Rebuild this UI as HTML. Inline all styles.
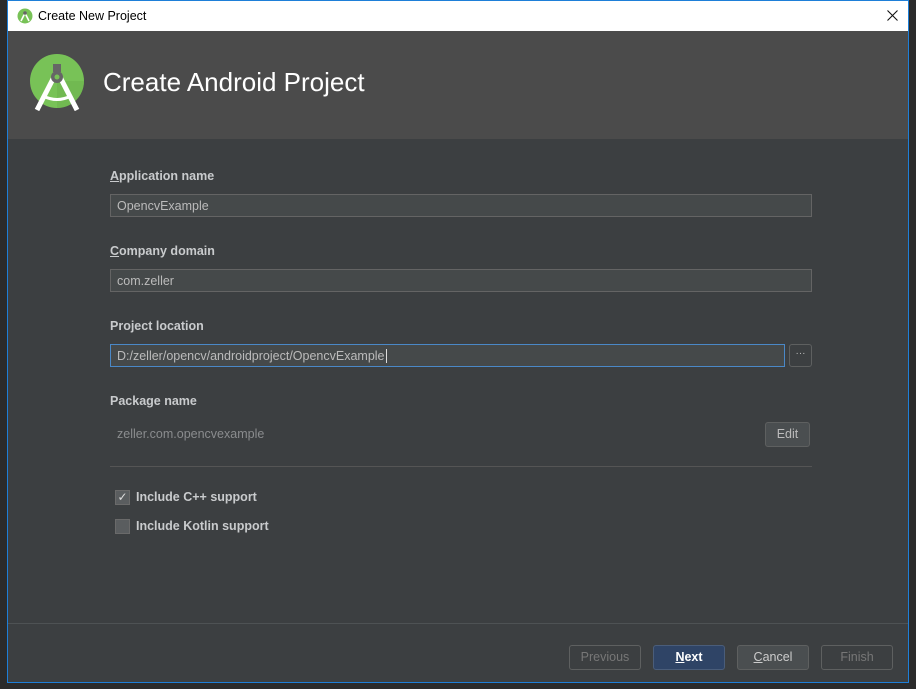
<!DOCTYPE html><html><head><style>
body{margin:0;width:916px;height:689px;background:#2b2b2b;position:relative;overflow:hidden;font-family:"Liberation Sans",sans-serif;}
.a{position:absolute}
.win{left:7px;top:0;width:900px;height:681px;border:1px solid #1e7fd8;background:#3c3f41}
.lbl{color:#c9cbcd;font-size:12.5px;font-weight:bold}
.fld{background:#45494a;border:1px solid #646464;height:21px;color:#bbb;font-size:12.5px;line-height:21px;padding-left:6px;box-sizing:border-box}
.btn{border:1px solid #5e6060;border-radius:3px;height:25px;width:72px;box-sizing:border-box;text-align:center;line-height:23px;font-size:12.5px}
</style></head><body>
<div class="a" style="left:0;top:0;width:7px;height:689px;background:#2b2b2b"></div>
<div class="a win">
 <div class="a" style="left:0;top:0;width:900px;height:30px;background:#fff"></div>
 <svg class="a" style="left:9px;top:7px" width="16" height="16" viewBox="0 0 16 16"><circle cx="8" cy="8" r="7.5" fill="#78c257"/><path d="M4 13 L8 5 L12 13" stroke="#fff" stroke-width="1.6" fill="none"/><circle cx="8" cy="5" r="1.8" fill="#666"/></svg>
 <div class="a" style="left:30px;top:8px;font-size:12.5px;color:#000">Create New Project</div>
 <svg class="a" style="left:879px;top:9px" width="11" height="11" viewBox="0 0 11 11"><path d="M0.5 0.5 L10.5 10.5 M10.5 0.5 L0.5 10.5" stroke="#111" stroke-width="1.1"/></svg>
 <div class="a" style="left:0;top:30px;width:900px;height:108px;background:#4b4b4b"></div>
 <svg class="a" style="left:21px;top:50px" width="56" height="60" viewBox="0 0 56 60"><circle cx="28" cy="30" r="27" fill="#78c257"/><path d="M28 30 L55 30 A27 27 0 0 1 28 57Z" fill="#6ab04c" opacity=".5"/><path d="M8 59 L26 24 M48 59 L30 24" stroke="#fff" stroke-width="5" fill="none"/><path d="M14 45 Q28 52 42 45" stroke="#fff" stroke-width="3" fill="none"/><rect x="24" y="13" width="8" height="8" fill="#666"/><circle cx="28" cy="26" r="6" fill="#666"/><circle cx="28" cy="26" r="2.5" fill="#78c257"/></svg>
 <div class="a" style="left:95px;top:66px;font-size:26px;color:#fff">Create Android Project</div>
 <div class="a lbl" style="left:102px;top:168px"><u>A</u>pplication name</div>
 <div class="a fld" style="left:102px;top:193px;width:702px;height:23px;line-height:22px">OpencvExample</div>
 <div class="a lbl" style="left:102px;top:243px"><u>C</u>ompany domain</div>
 <div class="a fld" style="left:102px;top:268px;width:702px;height:23px;line-height:22px">com.zeller</div>
 <div class="a lbl" style="left:102px;top:318px">Project location</div>
 <div class="a fld" style="left:102px;top:343px;width:675px;height:23px;line-height:22px;border-color:#4a88c7">D:/zeller/opencv/androidproject/OpencvExample<span style="border-left:1px solid #ddd;margin-left:1px"></span></div>
 <div class="a btn" style="left:781px;top:343px;width:23px;height:23px;line-height:18px;font-size:10px;color:#bbb">···</div>
 <div class="a lbl" style="left:102px;top:393px">Package name</div>
 <div class="a" style="left:109px;top:426px;color:#8a8c8e;font-size:12.5px">zeller.com.opencvexample</div>
 <div class="a btn" style="left:757px;top:421px;width:45px;background:#4a4e50;color:#bbb">Edit</div>
 <div class="a" style="left:102px;top:465px;width:702px;height:1px;background:#555"></div>
 <div class="a" style="left:107px;top:489px;width:13px;height:13px;background:#5a5d5f;border:1px solid #6a6a6a;color:#ddd;font-size:12px;line-height:13px;text-align:center">✓</div>
 <div class="a lbl" style="left:128px;top:489px">Include C++ support</div>
 <div class="a" style="left:107px;top:518px;width:13px;height:13px;background:#5a5d5f;border:1px solid #6a6a6a"></div>
 <div class="a lbl" style="left:128px;top:518px">Include Kotlin support</div>
 <div class="a" style="left:0;top:622px;width:900px;height:1px;background:#4e5254"></div>
 <div class="a btn" style="left:561px;top:644px;color:#777">Previous</div>
 <div class="a btn" style="left:645px;top:644px;background:#2f4466;border-color:#4a5d7a;color:#fff;font-weight:bold"><u>N</u>ext</div>
 <div class="a btn" style="left:729px;top:644px;background:#4a4e50;color:#ccc"><u>C</u>ancel</div>
 <div class="a btn" style="left:813px;top:644px;color:#777">Finish</div>
</div>
</body></html>
